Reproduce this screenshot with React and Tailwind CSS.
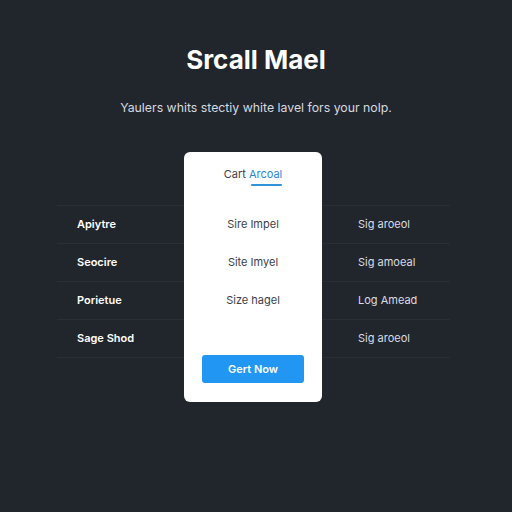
const leftRows = ["Apiytre", "Seocire", "Porietue", "Sage Shod"];
const rightRows = ["Sig aroeol", "Sig amoeal", "Log Amead", "Sig aroeol"];
const cardRows = ["Sire Impel", "Site Imyel", "Size hagel"];

const SideColumn = ({ rows, className }) => (
  <div className="mt-[53px] border-t border-[#2a2e36]">
    {rows.map((r, i) => (
      <div key={i} className={`flex h-[38px] items-center border-b border-[#2a2e36] ${className}`}>
        {r}
      </div>
    ))}
  </div>
);

export default function App() {
  return (
    <div className="min-h-screen bg-[#21252c] font-['Inter',sans-serif]">
      <div className="flex flex-col items-center pt-[44px]">
        <h1 className="text-[26px] font-bold leading-[32px] text-white">Srcall Mael</h1>
        <p className="mt-[23px] text-[12.3px] leading-[18px] text-[#d6dae0]">
          Yaulers whits stectiy white lavel fors your nolp.
        </p>

        <div className="mt-[35px] grid grid-cols-[127px_138px_128px] pr-[5px]">
          <SideColumn rows={leftRows} className="pl-[20px] text-[11px] font-semibold text-white" />

          <div className="flex h-[250px] flex-col items-center rounded-[6px] bg-white px-[18px]">
            <div className="mt-[15px] text-[11px] leading-[14px] text-[#3b4048]">
              Cart{" "}
              <span className="relative text-[#2787d6]">
                Arcoal
                <span className="absolute -bottom-[5px] left-[2px] right-0 h-[2px] rounded bg-[#2f93dc]" />
              </span>
            </div>
            <div className="mt-[36px] flex flex-col items-center gap-[24px] text-[11px] leading-[14px] text-[#3b4048]">
              {cardRows.map((r) => (
                <div key={r}>{r}</div>
              ))}
            </div>
            <button className="mt-[48px] h-[28px] w-full rounded-[3px] bg-[#2196f3] text-[11px] font-semibold text-white">
              Gert Now
            </button>
          </div>

          <SideColumn rows={rightRows} className="pl-[36px] text-[11px] text-[#d9dde3]" />
        </div>
      </div>
    </div>
  );
}
